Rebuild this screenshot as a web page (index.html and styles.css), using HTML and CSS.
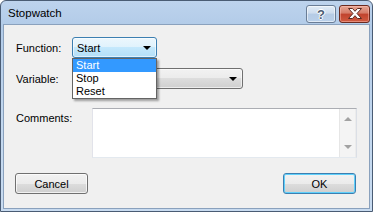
FILE: index.html
```html
<!DOCTYPE html>
<html>
<head>
<meta charset="utf-8">
<link rel="stylesheet" href="styles.css">
</head>
<body>
<div class="window">
  <div class="titlebar">
    <span class="title">Stopwatch</span>
    <div class="caption-buttons">
      <div class="cap help"><span class="help-glyph">?</span></div>
      <div class="cap close">
        <svg width="16" height="11" viewBox="0 0 16 11">
          <path d="M1.5 0.5 H5.5 L8 3.3 L10.5 0.5 H14.5 L10 5.5 L14.5 10.5 H10.5 L8 7.7 L5.5 10.5 H1.5 L6 5.5 Z" fill="#ffffff" stroke="#5a2a22" stroke-width="1" stroke-linejoin="round"/>
        </svg>
      </div>
    </div>
  </div>
  <div class="client">
    <div class="row row-function">
      <span class="lbl lbl-short">Function:</span>
      <div class="combo combo-focus combo-fn"><span class="combo-text">Start</span><span class="arrow"></span></div>
    </div>
    <div class="row row-variable">
      <span class="lbl lbl-short">Variable:</span>
      <div class="combo combo-var"><span class="combo-text"></span><span class="arrow"></span></div>
    </div>
    <div class="row row-comments">
      <span class="lbl lbl-long">Comments:</span>
      <div class="memo">
        <div class="memo-text"></div>
        <div class="vscroll">
          <span class="sarrow up"></span>
          <span class="sarrow down"></span>
        </div>
      </div>
    </div>
    <div class="row row-buttons">
      <div class="btn">Cancel</div>
      <div class="btn btn-default">OK</div>
    </div>
    <div class="dropdown">
      <div class="item selected">Start</div>
      <div class="item">Stop</div>
      <div class="item">Reset</div>
    </div>
  </div>
</div>
</body>
</html>
```

FILE: styles.css
```css
html, body {
  margin: 0;
  padding: 0;
}
body {
  width: 373px;
  height: 212px;
  overflow: hidden;
  background: #ffffff;
  font-family: "Liberation Sans", Arial, sans-serif;
  font-size: 11px;
  color: #000000;
}
.window {
  box-sizing: border-box;
  width: 373px;
  height: 212px;
  border: 1px solid #4a5c74;
  border-radius: 6px 6px 0 0;
  background: linear-gradient(#bdd3ed, #b2cbe8 12%, #c3d8ef 60%, #c8dbf0);
  padding: 0 2px 2px 2px;
  display: flex;
  flex-direction: column;
}
.titlebar {
  height: 23px;
  display: flex;
  align-items: center;
  padding: 0 0 0 5px;
}
.title {
  font-size: 11.5px;
  color: #000000;
  margin-top: 1px;
}
.caption-buttons {
  margin-left: auto;
  display: flex;
  gap: 3px;
  margin-top: 2px;
  margin-right: 0;
}
.cap {
  box-sizing: border-box;
  height: 18px;
  border-radius: 3px;
  display: flex;
  align-items: center;
  justify-content: center;
}
.help {
  width: 30px;
  border: 1px solid #6a7d96;
  background: linear-gradient(#e2ecf7, #cddcee 45%, #b5cbe5 50%, #b9d0ea);
  box-shadow: inset 0 0 0 1px rgba(255,255,255,0.55);
}
.help-glyph {
  font-family: "Liberation Sans", Arial, sans-serif;
  font-weight: bold;
  font-size: 13px;
  line-height: 13px;
  color: #4d5d74;
  text-shadow: 1px 0 0 #fff, -1px 0 0 #fff, 0 1px 0 #fff, 0 -1px 0 #fff;
  margin-top: 1px;
}
.close {
  width: 31px;
  border: 1px solid #6b2a1f;
  background: linear-gradient(#e7a694, #d57a66 45%, #c0432d 50%, #d05a40);
  box-shadow: inset 0 0 0 1px rgba(255,200,190,0.45);
}
.close svg {
  display: block;
}
.client {
  position: relative;
  flex: 1;
  border: 1px solid #8aa1bd;
  background: #f0f0f0;
  padding: 12px 12px 0 11px;
  display: flex;
  flex-direction: column;
}
.row {
  display: flex;
  align-items: center;
}
.lbl {
  flex: none;
  padding-left: 1px;
  box-sizing: border-box;
}
.lbl-short {
  width: 57px;
}
.lbl-long {
  width: 77px;
}
.row-variable {
  margin-top: 10px;
}
.row-comments {
  margin-top: 19px;
  align-items: flex-start;
}
.row-comments .lbl {
  padding-top: 4px;
}
.row-buttons {
  margin-top: 15px;
  justify-content: space-between;
  padding-right: 1px;
}
.combo {
  box-sizing: border-box;
  height: 21px;
  border: 1px solid #707070;
  border-radius: 3px;
  display: flex;
  align-items: center;
  padding: 0 4px 0 4px;
  background: linear-gradient(#f2f2f2, #ebebeb 50%, #dddddd 50%, #cfcfcf);
  box-shadow: inset 0 0 0 1px rgba(255,255,255,0.6);
}
.combo-fn {
  width: 85px;
}
.combo-var {
  width: 171px;
}
.combo-focus {
  border-color: #3c7fb1;
  background: linear-gradient(#ecf7fd, #dff2fc 50%, #c4e8fc 50%, #b3dff8);
}
.combo-text {
  flex: 1;
}
.arrow {
  width: 0;
  height: 0;
  border-left: 4px solid transparent;
  border-right: 4px solid transparent;
  border-top: 4px solid #000000;
  margin-right: 1px;
  margin-top: 1px;
}
.memo {
  box-sizing: border-box;
  width: 265px;
  height: 50px;
  background: #ffffff;
  border-style: solid;
  border-width: 1px;
  border-color: #abadb3 #dbdfe6 #e3e9ef #e2e3ea;
  display: flex;
}
.memo-text {
  flex: 1;
}
.vscroll {
  box-sizing: border-box;
  width: 17px;
  background: #f4f4f4;
  border-left: 1px solid #e6e6e6;
  border-right: 1px solid #ececec;
  display: flex;
  flex-direction: column;
  justify-content: space-between;
  align-items: center;
  padding: 8px 0 8px 0;
}
.sarrow {
  width: 0;
  height: 0;
  border-left: 4px solid transparent;
  border-right: 4px solid transparent;
}
.sarrow.up {
  border-bottom: 4px solid #a2a2a2;
}
.sarrow.down {
  border-top: 4px solid #a2a2a2;
}
.btn {
  box-sizing: border-box;
  width: 73px;
  height: 21px;
  border: 1px solid #707070;
  border-radius: 3px;
  background: linear-gradient(#f2f2f2, #ebebeb 50%, #dddddd 50%, #cfcfcf);
  box-shadow: inset 0 0 0 1px rgba(255,255,255,0.7);
  display: flex;
  align-items: center;
  justify-content: center;
  font-size: 11px;
}
.btn-default {
  border-color: #3c7fb1;
  box-shadow: inset 0 0 0 1px #5fd0fb;
}
.dropdown {
  position: absolute;
  left: 68px;
  top: 33px;
  width: 85px;
  box-sizing: border-box;
  border: 1px solid #646464;
  background: #ffffff;
  box-shadow: 2px 2px 2px rgba(0,0,0,0.35);
  padding: 0;
}
.item {
  height: 13px;
  line-height: 13px;
  padding-left: 3px;
}
.item.selected {
  background: #3399ff;
  color: #ffffff;
}
```
